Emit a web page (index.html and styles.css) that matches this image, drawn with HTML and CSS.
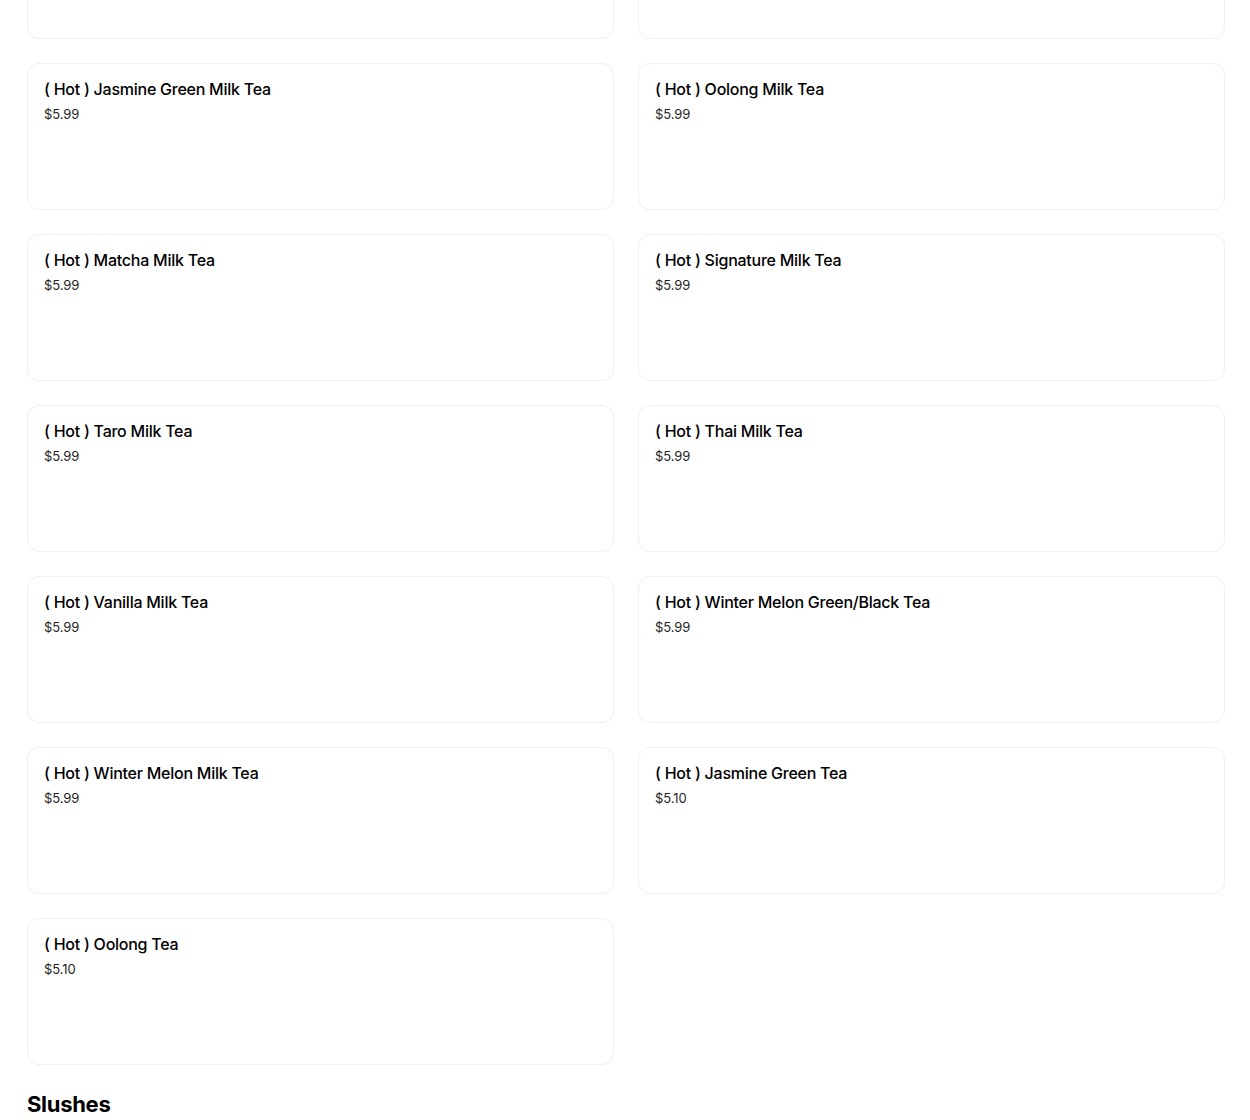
FILE: index.html
```html
<!DOCTYPE html>
<html lang="en">
<head>
    <meta charset="UTF-8">
    <meta name="viewport" content="width=device-width, initial-scale=1.0">
    <title>Menu</title>
    <link rel="stylesheet" href="styles.css">
</head>
<body>
    <div class="menu">
        <div class="item-grid">
            <!-- row scrolled above the window -->
            <div class="item-card"></div>
            <div class="item-card"></div>
            <div class="item-card">
                <h3 class="item-name">( Hot ) Jasmine Green Milk Tea</h3>
                <p class="item-price">$5.99</p>
            </div>
            <div class="item-card">
                <h3 class="item-name">( Hot ) Oolong Milk Tea</h3>
                <p class="item-price">$5.99</p>
            </div>
            <div class="item-card">
                <h3 class="item-name">( Hot ) Matcha Milk Tea</h3>
                <p class="item-price">$5.99</p>
            </div>
            <div class="item-card">
                <h3 class="item-name">( Hot ) Signature Milk Tea</h3>
                <p class="item-price">$5.99</p>
            </div>
            <div class="item-card">
                <h3 class="item-name">( Hot ) Taro Milk Tea</h3>
                <p class="item-price">$5.99</p>
            </div>
            <div class="item-card">
                <h3 class="item-name">( Hot ) Thai Milk Tea</h3>
                <p class="item-price">$5.99</p>
            </div>
            <div class="item-card">
                <h3 class="item-name">( Hot ) Vanilla Milk Tea</h3>
                <p class="item-price">$5.99</p>
            </div>
            <div class="item-card">
                <h3 class="item-name">( Hot ) Winter Melon Green/Black Tea</h3>
                <p class="item-price">$5.99</p>
            </div>
            <div class="item-card">
                <h3 class="item-name">( Hot ) Winter Melon Milk Tea</h3>
                <p class="item-price">$5.99</p>
            </div>
            <div class="item-card">
                <h3 class="item-name">( Hot ) Jasmine Green Tea</h3>
                <p class="item-price">$5.10</p>
            </div>
            <div class="item-card">
                <h3 class="item-name">( Hot ) Oolong Tea</h3>
                <p class="item-price">$5.10</p>
            </div>
        </div>

        <h2 class="section-title">Slushes</h2>
    </div>
</body>
</html>
```

FILE: styles.css
```css
* {
    margin: 0;
    padding: 0;
    box-sizing: border-box;
}

body {
    font-family: Inter, 'Liberation Sans', sans-serif;
    background: #ffffff;
    color: #000000;
}

.menu {
    width: 1198px;
    margin-left: 27px;
    margin-top: -108px;
}

.item-grid {
    display: grid;
    grid-template-columns: 1fr 1fr;
    gap: 24px;
}

.item-card {
    height: 147px;
    border: 1px solid #f0f0f0;
    border-radius: 12px;
    padding: 15px 16px 16px;
}

.item-name {
    font-size: 16px;
    font-weight: 500;
    line-height: 20px;
    letter-spacing: -0.25px;
}

.item-price {
    margin-top: 5px;
    font-size: 13px;
    line-height: 20px;
    letter-spacing: -0.1px;
    color: #1f1f1f;
}

.section-title {
    margin-top: 24px;
    font-size: 22px;
    font-weight: 700;
    line-height: 30px;
    letter-spacing: -0.3px;
}
```
